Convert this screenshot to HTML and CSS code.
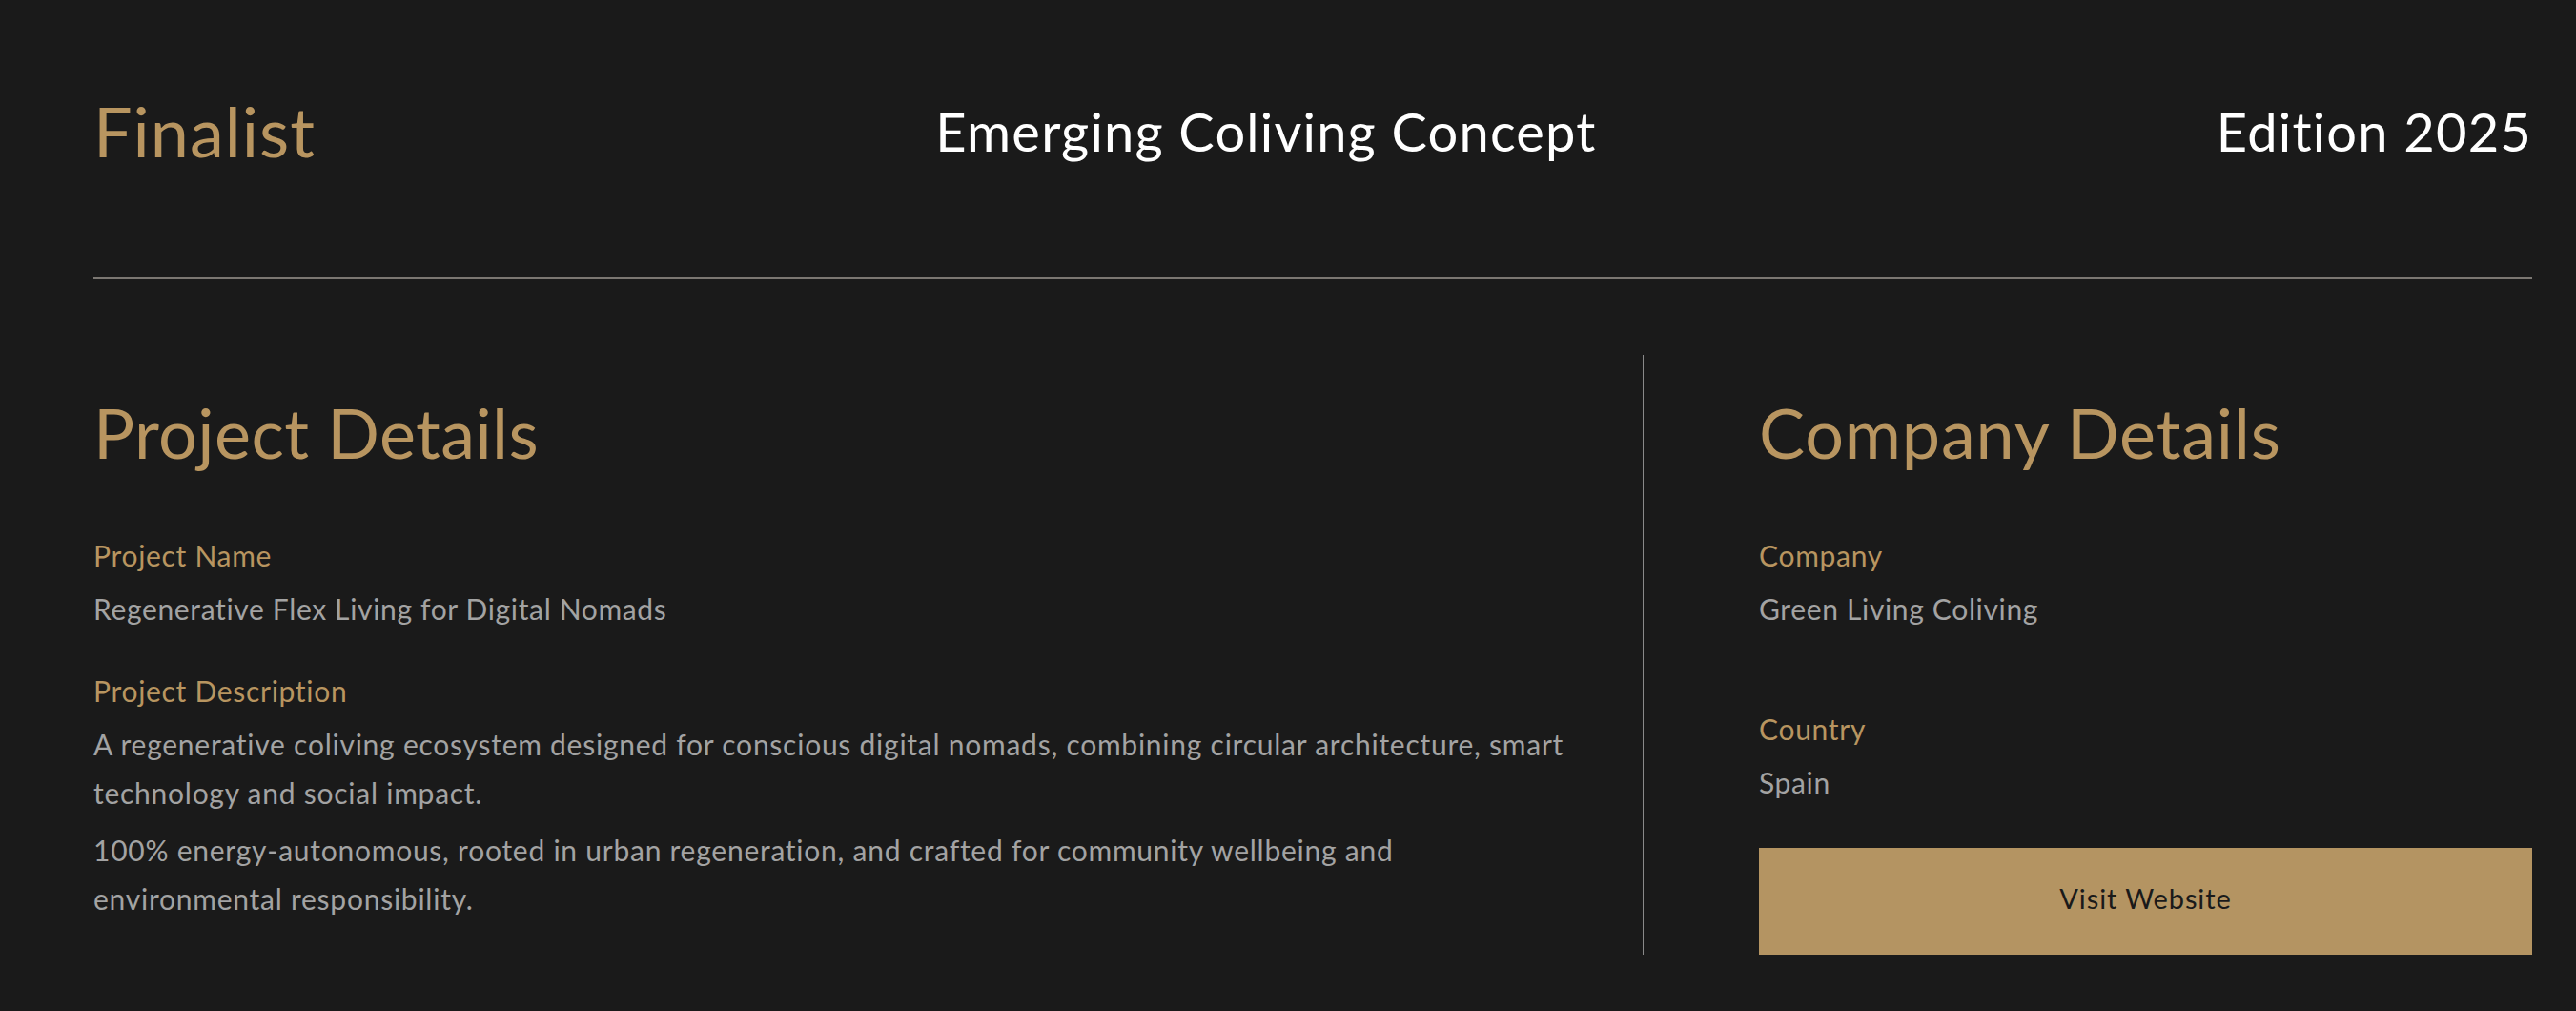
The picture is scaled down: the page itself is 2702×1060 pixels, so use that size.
FILE: index.html
```html
<!DOCTYPE html>
<html lang="en">
<head>
<meta charset="utf-8">
<title>Finalist – Emerging Coliving Concept</title>
<link rel="stylesheet" href="styles.css">
</head>
<body>
<div class="page">
  <header class="award-header">
    <div class="award-status">Finalist</div>
    <div class="award-category">Emerging Coliving Concept</div>
    <div class="award-edition">Edition 2025</div>
  </header>
  <main class="details">
    <section class="details-col details-project">
      <h2 class="details-title">Project Details</h2>
      <div class="field">
        <div class="field-label">Project Name</div>
        <div class="field-value">Regenerative Flex Living for Digital Nomads</div>
      </div>
      <div class="field">
        <div class="field-label">Project Description</div>
        <div class="field-text">
          <p>A regenerative coliving ecosystem designed for conscious digital nomads, combining circular architecture, smart technology and social impact.</p>
          <p>100% energy-autonomous, rooted in urban regeneration, and crafted for community wellbeing and environmental responsibility.</p>
        </div>
      </div>
    </section>
    <section class="details-col details-company">
      <h2 class="details-title">Company Details</h2>
      <div class="field field-wide">
        <div class="field-label">Company</div>
        <div class="field-value">Green Living Coliving</div>
      </div>
      <div class="field field-before-btn">
        <div class="field-label">Country</div>
        <div class="field-value">Spain</div>
      </div>
      <a class="visit-btn" href="#">Visit Website</a>
    </section>
  </main>
</div>
</body>
</html>
```

FILE: styles.css
```css
html, body {
  margin: 0;
  padding: 0;
  background: #1a1a1a;
}

body {
  font-family: Lato, "Noto Sans", sans-serif;
  font-variant-ligatures: none;
  color: #a3a3a3;
}

.page {
  padding: 94px 46px 60px 98px;
}

.award-header {
  display: flex;
  justify-content: space-between;
  align-items: center;
  padding-bottom: 110px;
  border-bottom: 2px solid #7b7772;
}

.award-status {
  font-size: 72px;
  line-height: 1.2;
  letter-spacing: 1px;
  color: #b89560;
}

.award-category,
.award-edition {
  font-size: 56px;
  line-height: 1.2;
  letter-spacing: 1.2px;
  color: #ffffff;
}

.details {
  display: grid;
  grid-template-columns: minmax(0, 1fr) 811px;
  column-gap: 121px;
  margin-top: 80px;
}

.details-col {
  padding-top: 38px;
}

.details-project {
  border-right: 1px solid #8a8a8a;
  padding-right: 60px;
}

.details-title {
  margin: 0 0 63px;
  font-size: 72px;
  line-height: 1.2;
  font-weight: 400;
  letter-spacing: 0.8px;
  color: #b89560;
}

.details-project .details-title {
  letter-spacing: 0.4px;
}

.field {
  margin-bottom: 41px;
}

.field:last-child {
  margin-bottom: 0;
}

.field-wide {
  margin-bottom: 81px;
}

.field-before-btn {
  margin-bottom: 46px;
}

.field-label {
  font-size: 30px;
  line-height: 45px;
  letter-spacing: 0.7px;
  color: #b89560;
  margin-bottom: 11px;
}

.field-value {
  font-size: 30px;
  line-height: 45px;
  letter-spacing: 0.65px;
  color: #a3a3a3;
}

.field-label + .field-text {
  margin-top: -3px;
}

.field-text p {
  margin: 0 0 9px;
  font-size: 30px;
  line-height: 51px;
  letter-spacing: 0.75px;
  color: #a3a3a3;
}

.field-text p:last-child {
  margin-bottom: 0;
}

.visit-btn {
  display: flex;
  align-items: center;
  justify-content: center;
  box-sizing: border-box;
  height: 112px;
  padding-bottom: 6px;
  background: #b49462;
  color: #1a1a1a;
  font-size: 29px;
  letter-spacing: 0.9px;
  text-decoration: none;
}
```
